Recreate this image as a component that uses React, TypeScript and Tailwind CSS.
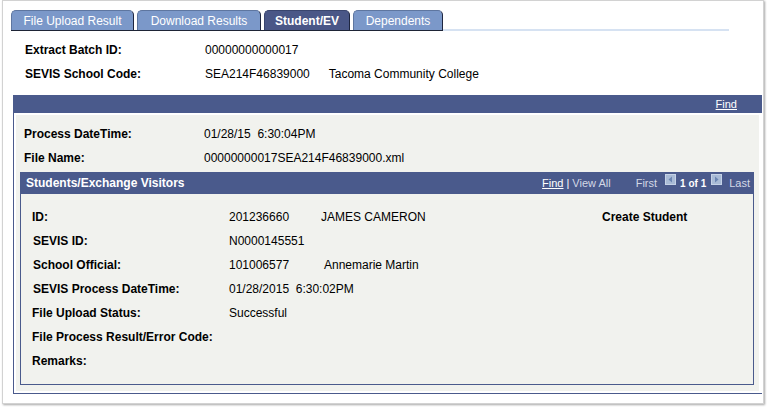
import React from "react";

const NavIcon = ({ dir }: { dir: "left" | "right" }) => (
  <svg width="11" height="11" viewBox="0 0 11 11" className="inline-block">
    <rect x="0" y="0" width="11" height="11" fill="#a9bbd6" />
    <rect x="0.5" y="0.5" width="10" height="10" fill="none" stroke="#c5d2e6" />
    {dir === "left" ? (
      <polygon points="7,2.5 7,8.5 3.5,5.5" fill="#6c86b3" />
    ) : (
      <polygon points="4,2.5 4,8.5 7.5,5.5" fill="#6c86b3" />
    )}
  </svg>
);

function Row({
  label,
  value,
  labelW,
}: {
  label: string;
  value?: string;
  labelW: string;
}) {
  return (
    <div className="flex items-center h-[24px]">
      <div className={`${labelW} shrink-0 font-bold text-black`}>{label}</div>
      {value && <div className="text-black whitespace-pre">{value}</div>}
    </div>
  );
}

export default function App() {
  return (
    <div className="w-[768px] h-[407px] bg-white font-['Liberation_Sans',Arial,sans-serif] text-[12px]">
      <div className="ml-[2px] w-[762px] h-[404px] border border-[#d2d2d2] shadow-[1px_1px_2px_rgba(0,0,0,0.35)] bg-white flex flex-col">
        {/* Tabs */}
        <div className="flex items-end mt-[9px] ml-[8px] mr-[34px]">
          <div className="flex gap-[3px] border-b border-[#1e2436]">
            <div className="w-[123px] h-[20px] rounded-t-[5px] bg-[#7b98c9] border-t border-l border-[#5e76a0] border-r border-r-[#1e2640] flex items-center justify-center text-white">
              File Upload Result
            </div>
            <div className="w-[124px] h-[20px] rounded-t-[5px] bg-[#7b98c9] border-t border-l border-[#5e76a0] border-r border-r-[#1e2640] flex items-center justify-center text-white">
              Download Results
            </div>
            <div className="w-[86px] h-[20px] rounded-t-[5px] bg-[#4a5787] border-t border-l border-[#39456e] border-r border-r-[#1e2640] flex items-center justify-center text-white font-bold">
              Student/EV
            </div>
            <div className="w-[90px] h-[20px] rounded-t-[5px] bg-[#7b98c9] border-t border-l border-[#5e76a0] border-r border-r-[#1e2640] flex items-center justify-center text-white">
              Dependents
            </div>
          </div>
          <div className="flex-1 h-[2px] bg-[#d6e2f2]" />
        </div>

        {/* Top fields */}
        <div className="mt-[7px] pl-[22px]">
          <Row label="Extract Batch ID:" value="00000000000017" labelW="w-[180px]" />
          <div className="flex items-center h-[24px]">
            <div className="w-[180px] shrink-0 font-bold text-black">SEVIS School Code:</div>
            <div className="text-black">SEA214F46839000</div>
            <div className="ml-[19px] text-black">Tacoma Community College</div>
          </div>
        </div>

        {/* Section */}
        <div className="mt-[9px] ml-[10px] mr-[1px] border-l border-b border-[#4a5a8c]">
          <div className="h-[18px] bg-[#4a5a8c] flex items-center justify-end pr-[25px]">
            <span className="text-white text-[11px] underline">Find</span>
          </div>
          <div className="mt-[2px] ml-[2px] mr-[3px] mb-[2px] bg-[#f1f2ee] pt-[7px] pb-[6px]">
            <div className="pl-[8px]">
              <Row label="Process DateTime:" value="01/28/15  6:30:04PM" labelW="w-[180px]" />
              <Row label="File Name:" value="00000000017SEA214F46839000.xml" labelW="w-[180px]" />
            </div>

            {/* Group box */}
            <div className="mt-[2px] ml-[4px] mr-[5px] border-l border-r border-b border-[#4a5a8c]">
              <div className="h-[22px] bg-[#4a5a8c] flex items-center pl-[5px] pr-[3px] text-white">
                <span className="font-bold">Students/Exchange Visitors</span>
                <div className="ml-auto flex items-center text-[11px]">
                  <span className="underline text-white">Find</span>
                  <span className="mx-[3px] text-white">|</span>
                  <span className="text-[#d3d8e6]">View All</span>
                  <span className="ml-[25px] text-[#d3d8e6]">First</span>
                  <span className="ml-[8px] self-start mt-[-1px] flex">
                    <NavIcon dir="left" />
                  </span>
                  <span className="ml-[4px] text-[10px] font-bold text-white">1 of 1</span>
                  <span className="ml-[5px] self-start mt-[-1px] flex">
                    <NavIcon dir="right" />
                  </span>
                  <span className="ml-[7px] text-[#d3d8e6]">Last</span>
                </div>
              </div>
              <div className="pt-[11px] pb-[11px] pl-[11px]">
                <div className="flex items-center h-[24px]">
                  <div className="w-[197px] shrink-0 font-bold text-black">ID:</div>
                  <div className="w-[92px] shrink-0 text-black">201236660</div>
                  <div className="w-[281px] shrink-0 text-black">JAMES CAMERON</div>
                  <div className="font-bold text-black">Create Student</div>
                </div>
                <div className="flex items-center h-[24px]">
                  <div className="w-[197px] shrink-0 font-bold text-black pl-[1px]">SEVIS ID:</div>
                  <div className="text-black">N0000145551</div>
                </div>
                <div className="flex items-center h-[24px]">
                  <div className="w-[197px] shrink-0 font-bold text-black pl-[1px]">School Official:</div>
                  <div className="w-[95px] shrink-0 text-black">101006577</div>
                  <div className="text-black">Annemarie Martin</div>
                </div>
                <div className="flex items-center h-[24px]">
                  <div className="w-[197px] shrink-0 font-bold text-black pl-[1px]">SEVIS Process DateTime:</div>
                  <div className="text-black whitespace-pre">01/28/2015  6:30:02PM</div>
                </div>
                <div className="flex items-center h-[24px]">
                  <div className="w-[197px] shrink-0 font-bold text-black">File Upload Status:</div>
                  <div className="text-black">Successful</div>
                </div>
                <div className="flex items-center h-[24px]">
                  <div className="w-[197px] shrink-0 font-bold text-black">File Process Result/Error Code:</div>
                </div>
                <div className="flex items-center h-[24px]">
                  <div className="w-[197px] shrink-0 font-bold text-black">Remarks:</div>
                </div>
              </div>
            </div>
          </div>
        </div>
      </div>
    </div>
  );
}
